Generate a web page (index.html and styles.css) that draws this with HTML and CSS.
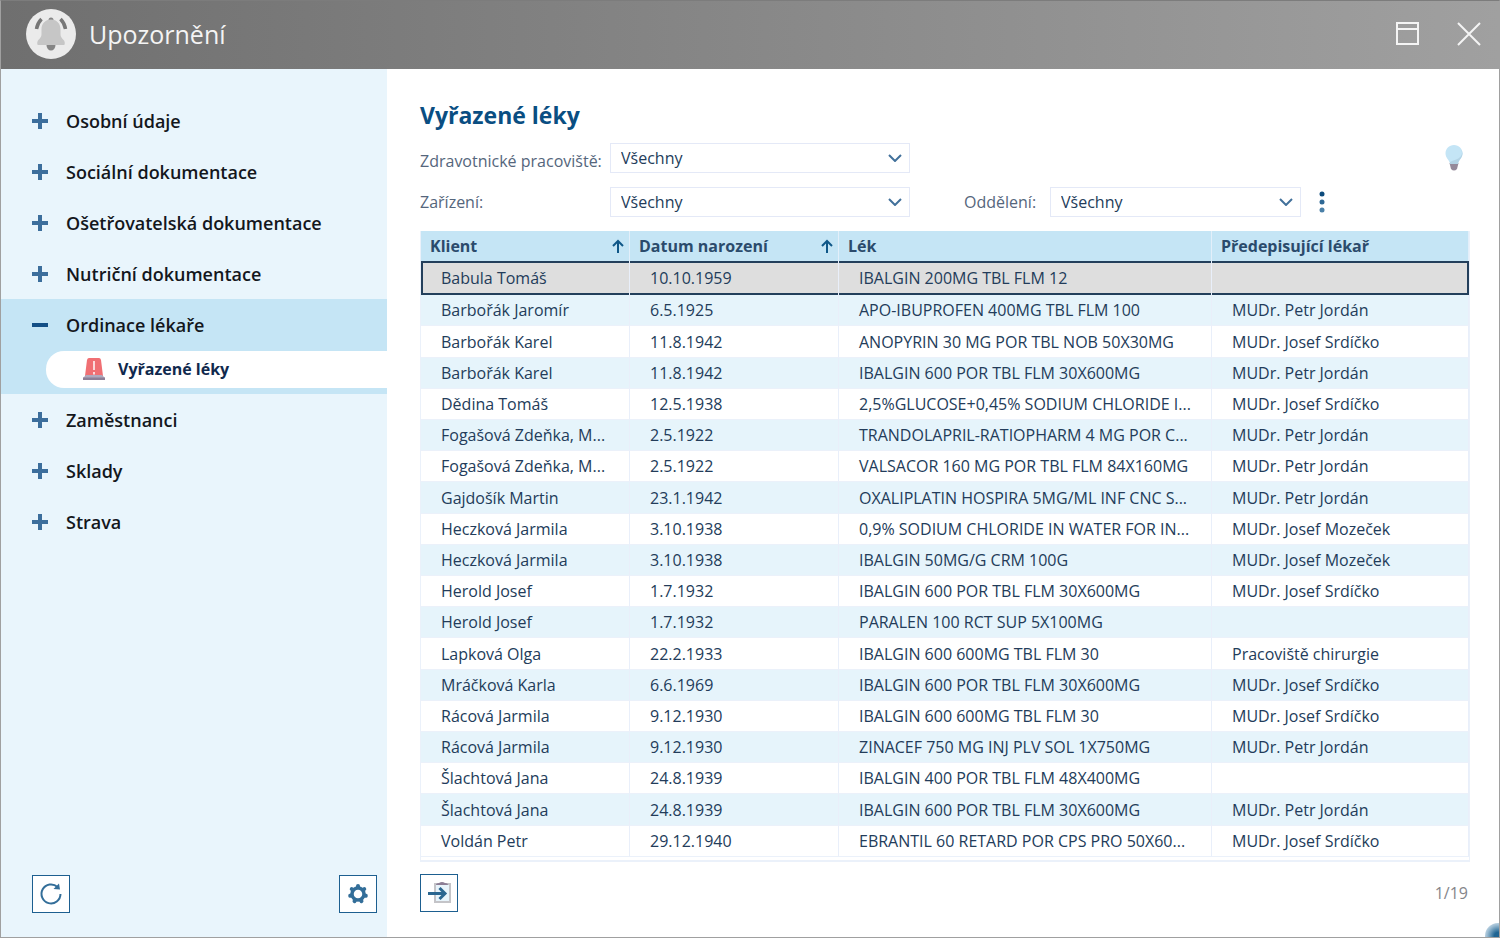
FILE: index.html
```html
<!DOCTYPE html>
<html lang="cs">

<head>
  <meta charset="UTF-8" />
  <meta name="viewport" content="width=device-width, initial-scale=1.0" />
  <title>Upozornění</title>
  <link rel="stylesheet" href="styles.css">
</head>

<body>
  <div class="window">
    <header class="titlebar">
      <svg class="bell" viewBox="0 0 50 50" width="50" height="50">
        <circle cx="25" cy="25" r="25" fill="#ebebeb" />
        <path d="M20.500 36h9a4.500 5.500 0 0 1-9 0z" fill="#858585" />
        <circle cx="25" cy="11" r="2.500" fill="#858585" />
        <path d="M25 10.500c6 0 9.500 4.500 9.500 9.500v5c0 3.500 2 4.500 3.500 6.500 1 1.500 1 4.500 0 4.500H12c-1 0-1-3 0-4.500 1.500-2 3.500-3 3.500-6.500v-5C15.500 15 19 10.500 25 10.500z" fill="#c6c6c6" />
        <path d="M15.500 10Q11.500 14 10.500 20M34.500 10Q38.500 14 39.500 20" fill="none" stroke="#777" stroke-width="3.500" />
      </svg>
      <h1>Upozornění</h1>
      <div class="window-buttons">
        <button aria-label="Maximalizovat">
          <svg viewBox="0 0 24 24" width="24" height="24" fill="none" stroke="#f4f4f4" stroke-width="2">
            <path d="M1 1h21v21H1zM1 7h21" />
          </svg>
        </button>
        <button aria-label="Zavřít">
          <svg viewBox="0 0 24 24" width="24" height="24" fill="none" stroke="#f4f4f4" stroke-width="2">
            <path d="M1 1l22 22M23 1L1 23" />
          </svg>
        </button>
      </div>
    </header>

    <div class="content">
      <aside>
        <nav>
          <button class="item"><span class="plus"></span>Osobní údaje</button>
          <button class="item"><span class="plus"></span>Sociální dokumentace</button>
          <button class="item"><span class="plus"></span>Ošetřovatelská dokumentace</button>
          <button class="item"><span class="plus"></span>Nutriční dokumentace</button>
          <div class="open">
            <button class="item"><span class="plus minus"></span>Ordinace lékaře</button>
            <a href="#" class="sub">
              <svg viewBox="0 0 24 24" width="24" height="24">
                <path d="M7 1h10q1.500 0 2 2L21 19H3L5 3q.5-2 2-2z" fill="#f06f73" />
                <path d="M12 4v9M12 15v2.500" stroke="#fbd9da" stroke-width="2" />
                <path d="M4 18h16l3 3H1z" fill="#b0a9bd" />
                <path d="M1 20.500h22V23H1z" fill="#8d7f96" />
              </svg>
              Vyřazené léky
            </a>
          </div>
          <button class="item"><span class="plus"></span>Zaměstnanci</button>
          <button class="item"><span class="plus"></span>Sklady</button>
          <button class="item"><span class="plus"></span>Strava</button>
        </nav>
        <div class="tools">
          <button class="tool" aria-label="Obnovit">
            <svg viewBox="0 0 24 24" width="24" height="24">
              <path d="M21.500 12A9.500 9.500 0 1 1 18.500 5" fill="none" stroke="#336e99" stroke-width="2" />
              <path d="M20 1.500l1 6-6.500-.5z" fill="#336e99" />
            </svg>
          </button>
          <button class="tool" aria-label="Nastavení">
            <svg viewBox="0 0 24 24" width="24" height="24">
              <circle cx="12" cy="12" r="6" fill="none" stroke="#336e99" stroke-width="3.500" />
              <g stroke="#336e99" stroke-width="4" stroke-linecap="round">
                <path id="tooth" d="M12 5V4" />
                <use href="#tooth" transform="rotate(51.430 12 12)" />
                <use href="#tooth" transform="rotate(102.860 12 12)" />
                <use href="#tooth" transform="rotate(154.290 12 12)" />
                <use href="#tooth" transform="rotate(205.710 12 12)" />
                <use href="#tooth" transform="rotate(257.140 12 12)" />
                <use href="#tooth" transform="rotate(308.570 12 12)" />
              </g>
            </svg>
          </button>
        </div>
      </aside>

      <main>
        <h2>Vyřazené léky</h2>
        <div class="filters">
          <label for="workplace">Zdravotnické pracoviště:</label>
          <div class="select">
            <select id="workplace"><option>Všechny</option></select>
            <svg viewBox="0 0 14 8" width="14" height="8"><path d="M1 1l6 6 6-6" /></svg>
          </div>
          <button class="hint" aria-label="Nápověda">
            <svg viewBox="0 0 18 26" width="18" height="26">
              <path d="M4.500 18h9l-1.500 6q-3 3-6 0z" fill="#94899a" />
              <path d="M9 0c5 0 8.500 4 8.500 8.500S13.500 15 13 19H5C4.500 15 .5 13 .5 8.500S4 0 9 0z" fill="#c4e5f6" />
              <path d="M16 4c3 6-1 10-9 12l-2 1v2h8c.5-4 4.500-6 4.500-10.500Q17.500 6 16 4z" fill="#b3d3e5" />
            </svg>
          </button>
        </div>
        <div class="filters">
          <label for="facility">Zařízení:</label>
          <div class="select">
            <select id="facility"><option>Všechny</option></select>
            <svg viewBox="0 0 14 8" width="14" height="8"><path d="M1 1l6 6 6-6" /></svg>
          </div>
          <label for="department" class="second">Oddělení:</label>
          <div class="select small">
            <select id="department"><option>Všechny</option></select>
            <svg viewBox="0 0 14 8" width="14" height="8"><path d="M1 1l6 6 6-6" /></svg>
          </div>
          <button class="more" aria-label="Další filtry">
            <svg viewBox="0 0 6 22" width="6" height="22">
              <circle cx="3" cy="3" r="2.500" fill="#0c4a7c" />
              <circle cx="3" cy="11" r="2.500" fill="#2e6895" />
              <circle cx="3" cy="19" r="2.500" fill="#4a80a8" />
            </svg>
          </button>
        </div>

        <div class="grid">
          <table>
            <colgroup>
              <col class="col-name"><col class="col-date"><col><col class="col-doctor">
            </colgroup>
            <thead>
              <tr>
                <th><div>Klient<svg viewBox="0 0 12 14" width="12" height="14"><path d="M6 14V2M1 7l5-5 5 5" /></svg></div></th>
                <th><div>Datum narození<svg viewBox="0 0 12 14" width="12" height="14"><path d="M6 14V2M1 7l5-5 5 5" /></svg></div></th>
                <th>Lék</th>
                <th>Předepisující lékař</th>
              </tr>
            </thead>
            <tbody>
              <tr class="selected"><td>Babula Tomáš</td><td>10.10.1959</td><td>IBALGIN 200MG TBL FLM 12</td><td></td></tr>
              <tr><td>Barbořák Jaromír</td><td>6.5.1925</td><td>APO-IBUPROFEN 400MG TBL FLM 100</td><td>MUDr. Petr Jordán</td></tr>
              <tr><td>Barbořák Karel</td><td>11.8.1942</td><td>ANOPYRIN 30 MG POR TBL NOB 50X30MG</td><td>MUDr. Josef Srdíčko</td></tr>
              <tr><td>Barbořák Karel</td><td>11.8.1942</td><td>IBALGIN 600 POR TBL FLM 30X600MG</td><td>MUDr. Petr Jordán</td></tr>
              <tr><td>Dědina Tomáš</td><td>12.5.1938</td><td>2,5%GLUCOSE+0,45% SODIUM CHLORIDE I...</td><td>MUDr. Josef Srdíčko</td></tr>
              <tr><td>Fogašová Zdeňka, M...</td><td>2.5.1922</td><td>TRANDOLAPRIL-RATIOPHARM 4 MG POR C...</td><td>MUDr. Petr Jordán</td></tr>
              <tr><td>Fogašová Zdeňka, M...</td><td>2.5.1922</td><td>VALSACOR 160 MG POR TBL FLM 84X160MG</td><td>MUDr. Petr Jordán</td></tr>
              <tr><td>Gajdošík Martin</td><td>23.1.1942</td><td>OXALIPLATIN HOSPIRA 5MG/ML INF CNC S...</td><td>MUDr. Petr Jordán</td></tr>
              <tr><td>Heczková Jarmila</td><td>3.10.1938</td><td>0,9% SODIUM CHLORIDE IN WATER FOR IN...</td><td>MUDr. Josef Mozeček</td></tr>
              <tr><td>Heczková Jarmila</td><td>3.10.1938</td><td>IBALGIN 50MG/G CRM 100G</td><td>MUDr. Josef Mozeček</td></tr>
              <tr><td>Herold Josef</td><td>1.7.1932</td><td>IBALGIN 600 POR TBL FLM 30X600MG</td><td>MUDr. Josef Srdíčko</td></tr>
              <tr><td>Herold Josef</td><td>1.7.1932</td><td>PARALEN 100 RCT SUP 5X100MG</td><td></td></tr>
              <tr><td>Lapková Olga</td><td>22.2.1933</td><td>IBALGIN 600 600MG TBL FLM 30</td><td>Pracoviště chirurgie</td></tr>
              <tr><td>Mráčková Karla</td><td>6.6.1969</td><td>IBALGIN 600 POR TBL FLM 30X600MG</td><td>MUDr. Josef Srdíčko</td></tr>
              <tr><td>Rácová Jarmila</td><td>9.12.1930</td><td>IBALGIN 600 600MG TBL FLM 30</td><td>MUDr. Josef Srdíčko</td></tr>
              <tr><td>Rácová Jarmila</td><td>9.12.1930</td><td>ZINACEF 750 MG INJ PLV SOL 1X750MG</td><td>MUDr. Petr Jordán</td></tr>
              <tr><td>Šlachtová Jana</td><td>24.8.1939</td><td>IBALGIN 400 POR TBL FLM 48X400MG</td><td></td></tr>
              <tr><td>Šlachtová Jana</td><td>24.8.1939</td><td>IBALGIN 600 POR TBL FLM 30X600MG</td><td>MUDr. Petr Jordán</td></tr>
              <tr><td>Voldán Petr</td><td>29.12.1940</td><td>EBRANTIL 60 RETARD POR CPS PRO 50X60...</td><td>MUDr. Josef Srdíčko</td></tr>
            </tbody>
          </table>
        </div>

        <footer>
          <button class="tool" aria-label="Přejít na záznam">
            <svg viewBox="0 0 24 24" width="24" height="24">
              <path d="M8 3h15v18H8z" fill="#e8f4fb" stroke="#c4c4c8" stroke-width="2" />
              <path d="M9 4q0-2 3-2 3-2 6 0 3 0 3 2z" fill="#8d7f96" />
              <path d="M1 12.500h16M12.500 7l5.500 5.500-5.500 5.500" fill="none" stroke="#2a6690" stroke-width="3" />
            </svg>
          </button>
          <span>1/19</span>
        </footer>
      </main>
    </div>
    <div class="resize"></div>
  </div>
</body>

</html>
```

FILE: styles.css
```css
* {
  margin: 0;
  padding: 0;
  box-sizing: border-box;
}

body {
  font-family: "Open Sans", sans-serif;
  font-size: 16px;
  color: #233c5a;
  background-color: #fff;
}

button {
  border: none;
  background: none;
  font-family: inherit;
}

svg {
  display: block;
  flex-shrink: 0;
}

.window {
  position: relative;
  display: flex;
  flex-direction: column;
  min-height: 100vh;
  overflow: hidden;
  border: 1px solid #a0a0a0;
  border-top-color: #7c7c7c;
}

.titlebar {
  display: flex;
  align-items: center;
  height: 68px;
  padding: 0 18px 2px 25px;
  background: linear-gradient(90deg, #6f6f6f, #a0a0a0);
}

.titlebar h1 {
  margin-left: 13px;
  font-size: 25px;
  font-weight: 400;
  line-height: 34px;
  color: #f4f4f4;
}

.window-buttons {
  display: flex;
  gap: 37px;
  margin-left: auto;
}

.content {
  display: flex;
  flex: 1;
}

aside {
  display: flex;
  flex-direction: column;
  width: 386px;
  flex-shrink: 0;
  padding-top: 26px;
  background-color: #e9f5fc;
}

.item {
  display: flex;
  align-items: center;
  width: 100%;
  height: 51px;
  padding-left: 31px;
  font-size: 18px;
  font-weight: 600;
  color: #14171c;
}

.plus {
  width: 16px;
  height: 16px;
  margin-right: 18px;
  background: linear-gradient(#3c6e9c, #3c6e9c) center / 16px 4px no-repeat,
    linear-gradient(#3c6e9c, #3c6e9c) center / 4px 16px no-repeat;
}

.minus {
  background: linear-gradient(#134f86, #134f86) center / 16px 4px no-repeat;
}

.open {
  padding-bottom: 6px;
  background-color: #c5e5f5;
}

.sub {
  display: flex;
  align-items: center;
  gap: 12px;
  height: 37px;
  margin: 1px 0 0 45px;
  padding: 0 0 1px 36px;
  border-radius: 18px 0 0 18px;
  background-color: #fff;
  font-weight: 700;
  color: #10294d;
  text-decoration: none;
}

.tools {
  display: flex;
  justify-content: space-between;
  margin-top: auto;
  padding: 0 10px 24px 31px;
}

.tool {
  display: flex;
  align-items: center;
  justify-content: center;
  width: 38px;
  height: 38px;
  border: 1px solid #1d5f90;
  background-color: #fff;
}

main {
  display: flex;
  flex-direction: column;
  flex: 1;
  min-width: 0;
  padding: 30px 29px 25px 33px;
}

h2 {
  margin-bottom: 12px;
  font-size: 23px;
  font-weight: 700;
  line-height: 32px;
  color: #0a4e82;
}

.filters {
  display: flex;
  align-items: center;
  height: 30px;
  margin-bottom: 14px;
}

.filters label {
  width: 190px;
  color: #55667c;
}

.filters label[for="workplace"] {
  padding-top: 6px;
}

.filters .second {
  width: 86px;
  margin-left: 54px;
}

.select {
  position: relative;
  width: 300px;
}

.small {
  width: 251px;
}

.select select {
  width: 100%;
  height: 30px;
  padding: 0 10px;
  border: 1px solid #e4e9f7;
  background-color: #fff;
  appearance: none;
  font: inherit;
  color: #233c5a;
}

.select svg {
  position: absolute;
  top: 11px;
  right: 8px;
  fill: none;
  stroke: #42719b;
  stroke-width: 2;
  pointer-events: none;
}

.hint {
  margin-left: auto;
  margin-right: 7px;
}

.more {
  margin-left: 18px;
}

.grid {
  display: flex;
  flex: 1;
  padding-bottom: 3px;
  border: 1px solid #ebf1fa;
  border-width: 0 1px 2px;
}

table {
  width: 100%;
  table-layout: fixed;
  border-collapse: separate;
  border-spacing: 0;
}

.col-name,
.col-date {
  width: 209px;
}

.col-doctor {
  width: 257px;
}

th {
  height: 30px;
  padding: 0 9px 1px;
  border-right: 1px solid #e3effa;
  background-color: #c5e5f5;
  text-align: left;
  font-weight: 700;
  color: #2b4b6c;
}

th div {
  display: flex;
  align-items: center;
  justify-content: space-between;
  margin-right: -4px;
}

th svg {
  fill: none;
  stroke: #0f5788;
  stroke-width: 2;
}

td {
  height: 31px;
  padding: 0 0 0 20px;
  border-right: 1px solid #e9effa;
  border-bottom: 1px solid #ebf1fa;
  line-height: 22px;
  white-space: nowrap;
}

tr:nth-child(even) td {
  background-color: #e6f4fb;
}

.selected td {
  height: 34px;
  border-bottom: none;
  background-color: #dedede;
  box-shadow: inset 0 2px #233f5b, inset 0 -2px #233f5b;
}

.selected td:first-child {
  box-shadow: inset 0 2px #233f5b, inset 0 -2px #233f5b, inset 2px 0 #233f5b;
}

.selected td:last-child {
  border-right: none;
  box-shadow: inset 0 2px #233f5b, inset 0 -2px #233f5b, inset -2px 0 #233f5b;
}

footer {
  display: flex;
  align-items: center;
  justify-content: space-between;
  margin-top: 12px;
  padding-right: 2px;
  color: #85858a;
}

.resize {
  position: absolute;
  right: -12px;
  bottom: -12px;
  width: 26px;
  height: 26px;
  border-radius: 50%;
  background: radial-gradient(circle, #1f6593 20%, #9dbdd3 60%, #fff);
}
```
